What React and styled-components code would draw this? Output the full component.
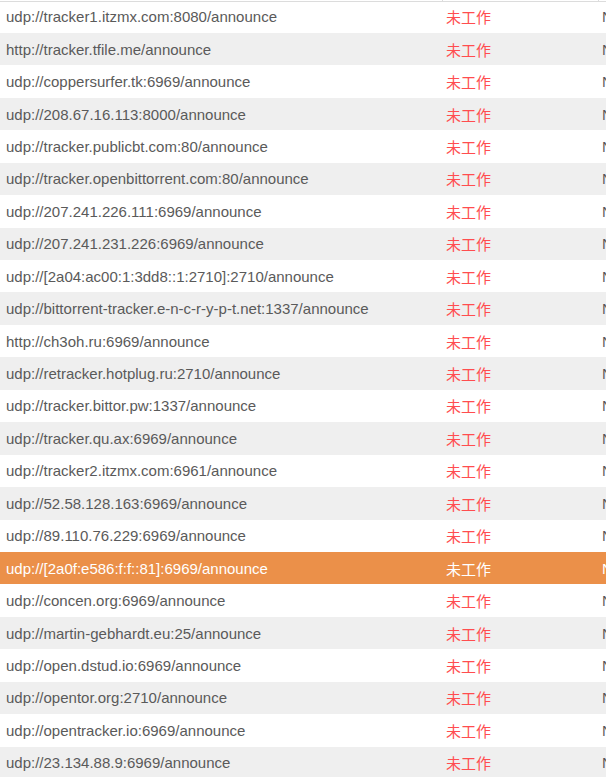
import styled, { createGlobalStyle } from "styled-components";

const trackers = [
  "udp://tracker1.itzmx.com:8080/announce",
  "http://tracker.tfile.me/announce",
  "udp://coppersurfer.tk:6969/announce",
  "udp://208.67.16.113:8000/announce",
  "udp://tracker.publicbt.com:80/announce",
  "udp://tracker.openbittorrent.com:80/announce",
  "udp://207.241.226.111:6969/announce",
  "udp://207.241.231.226:6969/announce",
  "udp://[2a04:ac00:1:3dd8::1:2710]:2710/announce",
  "udp://bittorrent-tracker.e-n-c-r-y-p-t.net:1337/announce",
  "http://ch3oh.ru:6969/announce",
  "udp://retracker.hotplug.ru:2710/announce",
  "udp://tracker.bittor.pw:1337/announce",
  "udp://tracker.qu.ax:6969/announce",
  "udp://tracker2.itzmx.com:6961/announce",
  "udp://52.58.128.163:6969/announce",
  "udp://89.110.76.229:6969/announce",
  "udp://[2a0f:e586:f:f::81]:6969/announce",
  "udp://concen.org:6969/announce",
  "udp://martin-gebhardt.eu:25/announce",
  "udp://open.dstud.io:6969/announce",
  "udp://opentor.org:2710/announce",
  "udp://opentracker.io:6969/announce",
  "udp://23.134.88.9:6969/announce",
];

const SELECTED = 17;

const GlobalStyle = createGlobalStyle`
  html, body {
    margin: 0;
    padding: 0;
    background: #fff;
    overflow: hidden;
  }
  body {
    font-family: "Liberation Sans", Arial, "Noto Sans CJK SC", sans-serif;
  }
`;

const Table = styled.div`
  width: 606px;
  height: 777px;
  overflow: hidden;
  font-size: 15px;
  color: #5a5a5a;
`;

const Header = styled.div`
  position: sticky;
  top: 0;
  z-index: 1;
  display: grid;
  grid-template-columns: 443px 156px 1fr;
  height: 1px;
  margin-bottom: -1.5px;
  border-bottom: 1px solid #dcdcdc;
`;

const HeadCell = styled.div`
  border-right: ${(p) => (p.$last ? "none" : "1px solid #dcdcdc")};
`;

const Row = styled.div`
  display: grid;
  grid-template-columns: 443px 156px 1fr;
  height: 32.45px;
  align-items: center;
  background: ${(p) => (p.$selected ? "#eb9049" : p.$striped ? "#efefef" : "#fff")};
  color: ${(p) => (p.$selected ? "#fff" : "#5a5a5a")};
`;

const Cell = styled.div`
  padding-left: ${(p) => p.$pad || 6}px;
  white-space: nowrap;
  overflow: hidden;
`;

const Status = styled(Cell)`
  font-family: "Noto Sans CJK SC", sans-serif;
  color: ${(p) => (p.$selected ? "#fff" : "#ff4d4f")};
`;

export default function App() {
  return (
    <>
      <GlobalStyle />
      <Table>
        <Header>
          <HeadCell />
          <HeadCell />
          <HeadCell $last />
        </Header>
        {trackers.map((url, i) => (
          <Row key={url} $striped={i % 2 === 1} $selected={i === SELECTED}>
            <Cell>{url}</Cell>
            <Status $pad={3} $selected={i === SELECTED}>未工作</Status>
            <Cell $pad={3}>N/A</Cell>
          </Row>
        ))}
      </Table>
    </>
  );
}
